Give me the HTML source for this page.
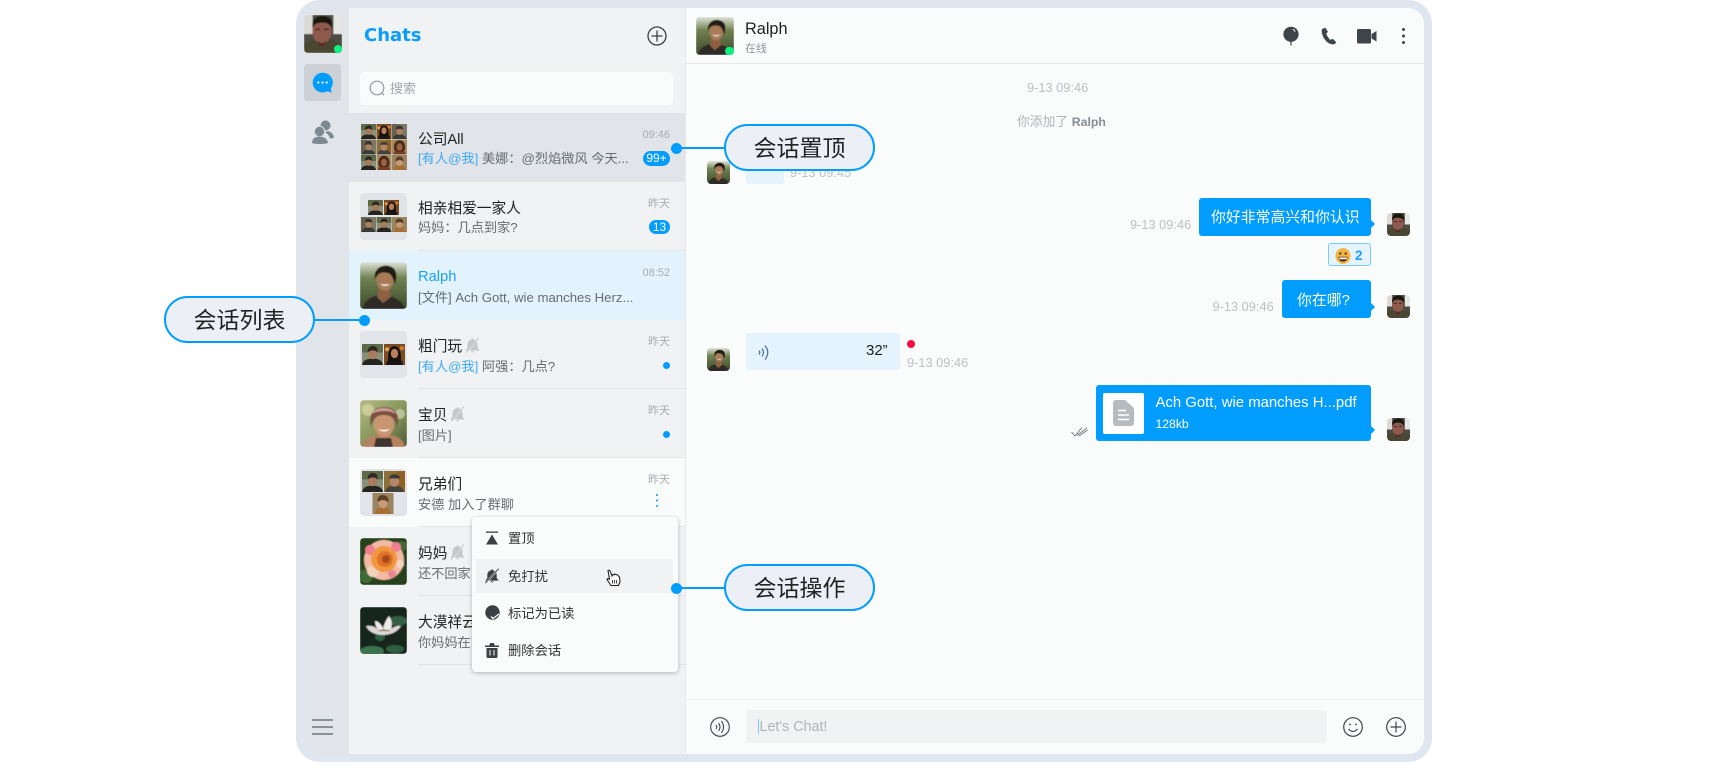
<!DOCTYPE html>
<html lang="zh"><head><meta charset="utf-8"><title>Chats</title>
<style>
html,body{margin:0;padding:0;width:1726px;height:770px;background:#fff;overflow:hidden}
body{position:relative;font-family:"Liberation Sans","Noto Sans CJK SC",sans-serif;color:#222}
.a{position:absolute}
.t{position:absolute;white-space:nowrap;line-height:20px;height:20px}
.frame{left:296px;top:0;width:1136px;height:762px;background:#dfe6ef;border-radius:24px}
.inner{left:304px;top:8px;width:1120px;height:746px;border-radius:16px;overflow:hidden;background:#fafbfb}
.bg{position:absolute;left:349px;width:336px}
.title{left:418px;font-size:14.7px;color:#222}
.sub{left:418px;font-size:13.2px;color:#666c71}
.at{color:#3fa9f7}
.time{font-size:11px;color:#a8adb2;right:1056px}
.ts{font-size:12.8px;color:#bdc1c5}
.badge{background:#009dff;color:#fff;font-size:12px;line-height:15px;height:15px;border-radius:8px;text-align:center}
.dot{background:#009dff;border-radius:50%;width:7px;height:7px}
.line{left:418px;width:267px;height:1px;background:#e3e6e8}
.av{position:absolute;border-radius:4px;overflow:hidden}
.gb{position:absolute;left:360px;width:47px;height:47px;background:#e1e4e8;border-radius:4px}
svg{position:absolute;display:block;overflow:visible}
.bub{background:#009dff;border-radius:3px}
.tail{width:0;height:0;border-left:4px solid #009dff;border-top:4px solid transparent;border-bottom:4px solid transparent;left:1371px}
.pill{background:#ecf0f6;border:2px solid #009dff;border-radius:24px;box-sizing:border-box;text-align:center;font-size:23px;line-height:44px;color:#222;width:151px;height:47px}
.conn{background:#009dff;height:2px}
.cdot{background:#009dff;border-radius:50%;width:11px;height:11px}
.mi{left:508px;font-size:13.3px;color:#333}
</style></head>
<body>
<svg width="0" height="0" style="position:absolute">
<defs>
<filter id="b"><feGaussianBlur stdDeviation="0.5"/></filter>
<linearGradient id="rb" x1="0" y1="0" x2="0" y2="1"><stop offset="0" stop-color="#dfe3d8"/><stop offset=".35" stop-color="#6f8150"/><stop offset="1" stop-color="#3d4b2c"/></linearGradient>
<linearGradient id="wb" x1="0" y1="0" x2="1" y2="1"><stop offset="0" stop-color="#b7bb85"/><stop offset=".6" stop-color="#7f8f55"/><stop offset="1" stop-color="#4d5b3a"/></linearGradient>
<symbol id="me" viewBox="0 0 40 40"><g filter="url(#b)"><rect width="40" height="40" fill="#4e4c42"/><rect x="0" width="9" height="20" fill="#dcdad6"/><rect x="31" width="9" height="20" fill="#e6e6e4"/><path d="M0 40V31L9 26H31L40 31V40Z" fill="#4a4632"/><ellipse cx="19" cy="17" rx="10" ry="13" fill="#8f5a4d"/><path d="M9 14C8 3 14 1 20 1S31 4 29 14C27 9 24 8 19 8S11 9 9 14Z" fill="#15120f"/><path d="M14 27q5 5 10 0l-2 6h-6z" fill="#5b2a28"/><path d="M12 15h5M21 15h5" stroke="#2e1c1a" stroke-width="1.500"/></g></symbol>
<symbol id="ra" viewBox="0 0 47 47"><g filter="url(#b)"><rect width="47" height="47" fill="url(#rb)"/><path d="M3 47C4 37 14 33 22 33S42 37 45 47Z" fill="#2f2c26"/><path d="M18 28l-1 7 6 6 8-6-2-9z" fill="#8d6042"/><ellipse cx="25" cy="18" rx="8.500" ry="11" fill="#a87a58"/><path d="M15 17C13 7 22 2 29 4S38 11 35 22C33 17 32 12 28 11S19 10 17 14Z" fill="#241d17"/><path d="M20 22q5 4 10 0q-5 1-10 0z" fill="#f8f4ee"/></g></symbol>
<symbol id="w" viewBox="0 0 47 47"><g filter="url(#b)"><rect width="47" height="47" fill="url(#wb)"/><circle cx="8" cy="10" r="6" fill="#dcd9a6" opacity=".7"/><circle cx="40" cy="14" r="5" fill="#e6e3c5" opacity=".6"/><path d="M2 47C4 38 12 36 18 35h12c6 1 13 3 15 12Z" fill="#b5825f"/><path d="M14 47l2-9h15l2 9z" fill="#3c3530"/><ellipse cx="24" cy="25" rx="10" ry="12" fill="#c9956f"/><path d="M11 27C8 14 14 7 24 7s17 7 13 20C35 18 31 15 24 15S13 18 11 27Z" fill="#7a5040"/><path d="M12 14C15 6 32 6 36 14 30 10 18 10 12 14Z" fill="#cf9f98"/><path d="M18 29q6 5 12 0q-6 2-12 0z" fill="#fff"/></g></symbol>
<symbol id="g1" viewBox="0 0 20 20"><rect width="20" height="20" fill="#8a9078"/><rect y="0" width="20" height="8" fill="#5c6a48"/><path d="M0 20c1-5 5-6 10-6s9 1 10 6z" fill="#26241f"/><ellipse cx="10" cy="9" rx="4.500" ry="5.500" fill="#a97a5c"/><path d="M5.500 8c-.5-5 3-6 5-6s5 1 4 6C13 5.500 8 5.500 5.500 8z" fill="#2b2620"/></symbol>
<symbol id="g2" viewBox="0 0 20 20"><rect width="20" height="20" fill="#7a4a22"/><circle cx="3" cy="5" r="2" fill="#e8a050"/><circle cx="17" cy="4" r="2" fill="#d67c30"/><path d="M2 20c0-5 3-6 8-6s8 1 8 6z" fill="#1a1512"/><path d="M4 16C3 5 7 2 10 2s7 3 6 14z" fill="#16110e"/><ellipse cx="10" cy="9" rx="3.500" ry="4.500" fill="#b67f5e"/></symbol>
<symbol id="g3" viewBox="0 0 20 20"><rect width="20" height="20" fill="#7d7868"/><rect x="0" y="0" width="8" height="20" fill="#66624f"/><path d="M1 20c1-5 5-6 9-6s8 1 9 6z" fill="#3a3a34"/><ellipse cx="10" cy="9" rx="4.500" ry="5.500" fill="#a97f60"/><path d="M5 8c0-5 3-6 5-6s5 1 5 6c-2-2-8-2-10 0z" fill="#3a352d"/></symbol>
<symbol id="g4" viewBox="0 0 20 20"><rect width="20" height="20" fill="#a88a60"/><path d="M2 20c0-5 3-6 8-6s8 1 8 6z" fill="#7a3f24"/><path d="M3 14C1 5 6 1 10 1s9 4 7 13c-2 3-12 3-14 0z" fill="#4c2a16"/><ellipse cx="10" cy="10" rx="4" ry="5" fill="#9a6444"/></symbol>
<symbol id="g5" viewBox="0 0 20 20"><rect width="20" height="20" fill="#9a8560"/><path d="M2 20c1-5 4-6 8-6s7 1 8 6z" fill="#a86e34"/><ellipse cx="10" cy="9" rx="4.500" ry="5.500" fill="#c99a78"/><path d="M5 9c-1-6 3-7 5-7s6 1 5 7c-2-3-8-3-10 0z" fill="#5a3e28"/></symbol>
<symbol id="g6" viewBox="0 0 20 20"><rect width="20" height="20" fill="#8a7038"/><rect x="12" width="8" height="20" fill="#8f6224"/><path d="M1 20c1-5 5-6 9-6s8 1 9 6z" fill="#44423c"/><ellipse cx="10" cy="10" rx="4.500" ry="5" fill="#b5866a"/><path d="M4.500 7c1-5 10-5 11 0z" fill="#3b3a38"/></symbol>
<symbol id="rose" viewBox="0 0 47 47"><g filter="url(#b)"><rect width="47" height="47" fill="#25421f"/><circle cx="6" cy="38" r="7" fill="#3f6a34"/><circle cx="42" cy="8" r="5" fill="#3f6a34"/><circle cx="24" cy="22" r="20" fill="#f3b9a2"/><circle cx="10" cy="12" r="5" fill="#ee7f90"/><circle cx="36" cy="9" r="5" fill="#ee7f90"/><circle cx="40" cy="26" r="4" fill="#f6d6c2"/><circle cx="13" cy="33" r="6" fill="#f2d2bc"/><circle cx="32" cy="36" r="4" fill="#e88795"/><circle cx="24" cy="21" r="13" fill="#f0973f"/><circle cx="25" cy="21" r="8" fill="#df7226"/><circle cx="26" cy="21" r="4" fill="#a84a1a"/></g></symbol>
<symbol id="lotus" viewBox="0 0 47 47"><g filter="url(#b)"><rect width="47" height="47" fill="#13261a"/><ellipse cx="38" cy="14" rx="9" ry="5" fill="#345f42"/><ellipse cx="12" cy="44" rx="12" ry="5" fill="#3b7350"/><ellipse cx="35" cy="42" rx="9" ry="4" fill="#2f5e40"/><ellipse cx="20" cy="30" rx="5" ry="4" fill="#2f5e40"/><path d="M6 19c6-1 10 1 13 5h10c4-4 8-6 12-5-3 5-9 9-18 9S8 24 6 19z" fill="#dcd7d4"/><path d="M15 14c3 0 6 3 8 7 2-6 4-10 6-12 2 3 4 6 2 14H18c-2-3-3-6-3-9z" fill="#efebea"/><circle cx="23.500" cy="22" r="1.300" fill="#cfc36a"/></g></symbol>
<symbol id="mute" viewBox="0 0 24 24"><path d="M12 2a1.600 1.600 0 0 0-1.600 1.600C6.500 4.600 5 7.200 5 10.500V15l-3 4h20l-3-4v-4.500c0-3.300-1.500-5.900-5.400-6.900A1.600 1.600 0 0 0 12 2z"/><path d="M9.800 20a2.300 2.300 0 0 0 4.400 0z"/></symbol>
</defs></svg>

<div class="a frame"></div>
<div class="a inner"></div>

<div class="a" style="left:304px;top:8px;width:45px;height:746px;background:#e1e4e8;border-radius:16px 0 0 16px"></div>
<div class="bg" style="top:8px;height:746px;background:#f0f2f4"></div>
<div class="a" style="left:685px;top:8px;width:1px;height:746px;background:#e6e9eb"></div>

<!-- sidebar -->
<div class="av" style="left:304px;top:15px;width:38px;height:38px"><svg width="38" height="38"><use href="#me" width="38" height="38"/></svg></div>
<div class="a" style="left:333.500px;top:45px;width:8px;height:8px;border-radius:50%;background:#0cf27f"></div>
<div class="a" style="left:304px;top:64px;width:37px;height:37px;background:#cdd1d5;border-radius:4px"></div>
<svg style="left:312px;top:72px" width="21" height="21" viewBox="0 0 21 21"><path d="M10.500 .8a9.800 9.800 0 1 0 4.700 18.400l4.600 1.300-1-3.900A9.800 9.800 0 0 0 10.500 .8z" fill="#009dff"/><circle cx="6.300" cy="10.500" r="1.100" fill="#fff"/><circle cx="10.500" cy="10.500" r="1.100" fill="#fff"/><circle cx="14.700" cy="10.500" r="1.100" fill="#fff"/></svg>
<svg style="left:311px;top:120px" width="23" height="24" viewBox="0 0 23 24" fill="#7e8a93"><circle cx="14.500" cy="5.500" r="5"/><path d="M17 11c3 .8 5.500 3 6 6.500-1 .8-2.500 1-4 .9-.6-2.500-2.500-4.800-5-6z"/><circle cx="8.500" cy="11.500" r="5.200" stroke="#e1e4e8" stroke-width="1"/><path d="M1 23c0-4 3-6.500 7.500-6.500s8 2.500 8.500 6.500c-3 1.300-13 1.300-16 0z"/></svg>
<div class="a" style="left:312px;top:719px;width:21px;height:1.500px;background:#8a9298"></div>
<div class="a" style="left:312px;top:726px;width:21px;height:1.500px;background:#8a9298"></div>
<div class="a" style="left:312px;top:733px;width:21px;height:1.500px;background:#8a9298"></div>

<!-- list header -->
<div class="t" style="left:364px;top:26px;font-family:'DejaVu Sans',sans-serif;font-weight:bold;font-size:18px;color:#0a9dfb">Chats</div>
<svg style="left:646px;top:25px" width="22" height="22" viewBox="0 0 22 22" fill="none" stroke="#3b4045" stroke-width="1.300"><circle cx="11" cy="11" r="9"/><path d="M11 5.500v11M5.500 11h11"/></svg>
<div class="a" style="left:360px;top:72px;width:313px;height:33px;background:#fafbfb;border-radius:4px"></div>
<svg style="left:369px;top:80px" width="17" height="17" viewBox="0 0 17 17" fill="none" stroke="#8f9aa2" stroke-width="1.200"><circle cx="8" cy="8" r="6.800"/><path d="M12.800 12.800l2.200 2.400"/></svg>
<div class="t" style="left:390px;top:79px;font-size:13px;color:#a2a8ad">搜索</div>

<!-- items -->
<div class="bg" style="top:113px;height:69px;background:#e1e4e8"></div>
<div class="bg" style="top:251px;height:69px;background:#e3f3fe"></div>
<div class="bg" style="top:458px;height:69px;background:#fafbfb"></div>
<div class="a line" style="top:250px"></div>
<div class="a line" style="top:388px"></div>
<div class="a line" style="top:457px"></div>
<div class="a line" style="top:526px"></div>
<div class="a line" style="top:595px"></div>
<div class="a line" style="top:664px"></div>

<!-- item1 avatars -->
<svg style="left:361px;top:124px" width="46" height="47" viewBox="0 0 46 47">
<use href="#g1" x="0" y="0" width="15" height="15"/><use href="#g2" x="15.500" y="0" width="15" height="15"/><use href="#g3" x="31" y="0" width="15" height="15"/>
<use href="#g3" x="0" y="15.500" width="15" height="15"/><use href="#g6" x="15.500" y="15.500" width="15" height="15"/><use href="#g4" x="31" y="15.500" width="15" height="15"/>
<use href="#g1" x="0" y="31" width="15" height="15"/><use href="#g4" x="15.500" y="31" width="15" height="15"/><use href="#g5" x="31" y="31" width="15" height="15"/></svg>
<div class="t title" style="top:130px">公司All</div>
<div class="t sub" style="top:149px"><span class="at">[有人@我]</span> 美娜：@烈焰微风 今天...</div>
<div class="t time" style="top:125px;right:1056px">09:46</div>
<div class="a badge" style="left:643px;top:151px;width:27px">99+</div>

<!-- item2 -->
<div class="gb" style="top:193px"></div>
<svg style="left:361px;top:200px" width="46" height="33" viewBox="0 0 46 33">
<use href="#g1" x="7" y="0" width="15" height="15"/><use href="#g2" x="23" y="0" width="15" height="15"/>
<use href="#g3" x="0" y="17" width="15" height="15"/><use href="#g1" x="15.500" y="17" width="15" height="15"/><use href="#g5" x="31" y="17" width="15" height="15"/></svg>
<div class="t title" style="top:199px">相亲相爱一家人</div>
<div class="t sub" style="top:218px">妈妈：几点到家?</div>
<div class="t time" style="top:194px">昨天</div>
<div class="a badge" style="left:649px;top:220px;width:21px;height:14px;line-height:14px">13</div>

<!-- item3 -->
<div class="av" style="left:360px;top:262px;width:47px;height:47px"><svg width="47" height="47"><use href="#ra" width="47" height="47"/></svg></div>
<div class="t title" style="top:266.500px;color:#1b9ff8;font-size:14.700px">Ralph</div>
<div class="t sub" style="top:288px">[文件] Ach Gott, wie manches Herz...</div>
<div class="t time" style="top:263px">08:52</div>

<!-- item4 -->
<div class="gb" style="top:331px"></div>
<svg style="left:362px;top:343px" width="43" height="23" viewBox="0 0 43 23"><use href="#g1" x="0" y="0" width="21" height="23"/><use href="#g2" x="22" y="0" width="21" height="23"/></svg>
<div class="t title" style="top:337px">粗门玩</div>
<svg style="left:464px;top:337px" width="17" height="17" viewBox="0 0 24 24" fill="#c3c8cc"><use href="#mute" width="24" height="24"/><path d="M3 23L21 1" stroke="#f0f2f4" stroke-width="2"/><path d="M3 22L21 1" stroke="#c3c8cc" stroke-width="1.500"/></svg>
<div class="t sub" style="top:357px"><span class="at">[有人@我]</span> 阿强：几点?</div>
<div class="t time" style="top:332px">昨天</div>
<div class="a dot" style="left:662.500px;top:361.500px"></div>

<!-- item5 -->
<div class="av" style="left:360px;top:400px;width:47px;height:47px"><svg width="47" height="47"><use href="#w" width="47" height="47"/></svg></div>
<div class="t title" style="top:406px">宝贝</div>
<svg style="left:449px;top:406px" width="17" height="17" viewBox="0 0 24 24" fill="#c3c8cc"><use href="#mute" width="24" height="24"/><path d="M3 23L21 1" stroke="#f0f2f4" stroke-width="2"/><path d="M3 22L21 1" stroke="#c3c8cc" stroke-width="1.500"/></svg>
<div class="t sub" style="top:426px">[图片]</div>
<div class="t time" style="top:401px">昨天</div>
<div class="a dot" style="left:662.500px;top:430.500px"></div>

<!-- item6 -->
<div class="gb" style="top:469px"></div>
<svg style="left:362px;top:471px" width="43" height="43" viewBox="0 0 43 43"><use href="#g1" x="0" y="0" width="21" height="21"/><use href="#g6" x="22" y="0" width="21" height="21"/><use href="#g5" x="10.500" y="22" width="21" height="21"/></svg>
<div class="t title" style="top:475px">兄弟们</div>
<div class="t sub" style="top:495px">安德 加入了群聊</div>
<div class="t time" style="top:470px">昨天</div>
<div class="a" style="left:655.700px;top:494px;width:2px;height:2px;border-radius:50%;background:#009dff;box-shadow:0 5.500px 0 #009dff,0 11px 0 #009dff"></div>

<!-- item7 -->
<div class="av" style="left:360px;top:538px;width:47px;height:47px"><svg width="47" height="47"><use href="#rose" width="47" height="47"/></svg></div>
<div class="t title" style="top:544px">妈妈</div>
<svg style="left:449px;top:544px" width="17" height="17" viewBox="0 0 24 24" fill="#c3c8cc"><use href="#mute" width="24" height="24"/><path d="M3 23L21 1" stroke="#f0f2f4" stroke-width="2"/><path d="M3 22L21 1" stroke="#c3c8cc" stroke-width="1.500"/></svg>
<div class="t sub" style="top:564px">还不回家了</div>

<!-- item8 -->
<div class="av" style="left:360px;top:607px;width:47px;height:47px"><svg width="47" height="47"><use href="#lotus" width="47" height="47"/></svg></div>
<div class="t title" style="top:613px">大漠祥云</div>
<div class="t sub" style="top:633px">你妈妈在家</div>

<!-- chat header -->
<div class="a" style="left:686px;top:63px;width:738px;height:1px;background:#e6e9eb"></div>
<div class="av" style="left:696px;top:17px;width:38px;height:38px"><svg width="38" height="38"><use href="#ra" width="38" height="38"/></svg></div>
<div class="a" style="left:725px;top:46.500px;width:8.500px;height:8.500px;border-radius:50%;background:#0cf27f"></div>
<div class="t" style="left:745px;top:19px;font-size:16.300px;color:#222">Ralph</div>
<div class="t" style="left:745px;top:39px;font-size:11px;color:#8f979d">在线</div>
<svg style="left:1283px;top:26px" width="16" height="20" viewBox="0 0 16 20"><circle cx="8" cy="8.300" r="7.600" fill="#3f464b"/><path d="M7.400 14h1.200v5.500H7.400z" fill="#3f464b"/><path d="M9.800 3.400a3.500 3.500 0 0 1 2.300 2.400" stroke="#fafbfb" stroke-width=".9" fill="none"/></svg>
<svg style="left:1321px;top:27px" width="16" height="18" viewBox="0 0 16 18"><path d="M4.300 .6L.9 2.100C.3 5.500 1.400 9.100 3.800 12.500c2 2.900 5.200 4.900 8.300 4.900 1.300 0 2.800-1.100 3.100-2.300l-3.500-3.400-2.300 1.200C7.700 11.500 6 9 5.300 6.500L7 4.900z" fill="#3f464b"/></svg>
<svg style="left:1357px;top:29px" width="20" height="15" viewBox="0 0 20 15"><rect x="0" y="0" width="14" height="14.500" rx="1.500" fill="#3f464b"/><path d="M14.500 5l5-3v10.500l-5-3z" fill="#3f464b"/></svg>
<div class="a" style="left:1401.500px;top:27.500px;width:3.500px;height:3.500px;border-radius:50%;background:#3f464b;box-shadow:0 6.500px 0 #3f464b,0 13px 0 #3f464b"></div>

<!-- messages -->
<div class="t ts" style="left:1027px;top:78px">9-13 09:46</div>
<div class="t" style="left:1017px;top:112px;font-size:12.800px;color:#b0b4b8">你添加了 <span style="color:#858e95;font-weight:bold;font-size:12.300px">Ralph</span></div>

<div class="av" style="left:707px;top:161px;width:23px;height:23px"><svg width="23" height="23"><use href="#ra" width="23" height="23"/></svg></div>
<div class="a" style="left:746px;top:150px;width:38px;height:34px;background:#e4f3fe;border-radius:3px"></div>
<div class="t ts" style="left:790px;top:163px">9-13 09:45</div>

<div class="a bub" style="left:1199px;top:198px;width:172px;height:38px"></div>
<div class="a tail" style="top:220px"></div>
<div class="t" style="left:1211px;top:208px;font-size:14.870px;color:#fff">你好非常高兴和你认识</div>
<div class="t ts" style="left:1130px;top:215px">9-13 09:46</div>
<div class="av" style="left:1387px;top:213px;width:23px;height:23px"><svg width="23" height="23"><use href="#me" width="23" height="23"/></svg></div>

<div class="a" style="left:1328px;top:243px;width:43px;height:23px;box-sizing:border-box;background:#e4f3fe;border:1px solid #7cc8fb;border-radius:3px"></div>
<svg style="left:1335px;top:247px" width="16" height="18" viewBox="0 0 16 18"><ellipse cx="8" cy="9" rx="7.500" ry="8" fill="#f4b544"/><circle cx="5.300" cy="6.500" r="1.200" fill="#5b3d1a"/><circle cx="10.700" cy="6.500" r="1.200" fill="#5b3d1a"/><path d="M3.300 9.800h9.400c-.2 3.500-2.300 5-4.700 5s-4.500-1.500-4.700-5z" fill="#5b3d1a"/><path d="M4.200 10.500h7.600v1.700H4.200z" fill="#fff"/></svg>
<div class="t" style="left:1355px;top:246px;font-size:13.500px;font-weight:bold;color:#1b9ff8">2</div>

<div class="a bub" style="left:1281.500px;top:280px;width:89.500px;height:38px"></div>
<div class="a tail" style="top:303px"></div>
<div class="t" style="left:1297px;top:291px;font-size:14.870px;color:#fff">你在哪?</div>
<div class="t ts" style="left:1212.500px;top:297px">9-13 09:46</div>
<div class="av" style="left:1387px;top:295px;width:23px;height:23px"><svg width="23" height="23"><use href="#me" width="23" height="23"/></svg></div>

<div class="av" style="left:707px;top:348px;width:23px;height:23px"><svg width="23" height="23"><use href="#ra" width="23" height="23"/></svg></div>
<div class="a" style="left:745.500px;top:333px;width:154px;height:37px;background:#e4f3fe;border-radius:3px"></div>
<svg style="left:757px;top:344px" width="13" height="17" viewBox="0 0 13 17" fill="none" stroke="#4f74ad" stroke-width="1.300"><path d="M2 6.500q1.500 2 0 4"/><path d="M5 4.500q3 4 0 8"/><path d="M8 1.500q5.500 7 0 14"/></svg>
<div class="t" style="left:866px;top:341px;font-size:15px;color:#222">32”</div>
<div class="a" style="left:906.500px;top:340px;width:8px;height:8px;border-radius:50%;background:#ff0a3c"></div>
<div class="t ts" style="left:907px;top:353px">9-13 09:46</div>

<svg style="left:1071px;top:427px" width="17" height="10" viewBox="0 0 17 10" fill="none" stroke="#6c7378" stroke-width=".9"><path d="M.5 5l3.500 4L11 .5"/><path d="M6 8.500L16 .8"/><path d="M8 9L16.500 3"/></svg>
<div class="a bub" style="left:1096px;top:385px;width:275px;height:56px"></div>
<div class="a tail" style="top:426px"></div>
<div class="a" style="left:1103px;top:393px;width:41px;height:41px;background:#fff;border-radius:2px"></div>
<svg style="left:1113px;top:400px" width="21" height="26" viewBox="0 0 21 26"><path d="M3 0h9l9 8v15a3 3 0 0 1-3 3H3a3 3 0 0 1-3-3V3a3 3 0 0 1 3-3z" fill="#b5bbbf"/><path d="M5 10.500h8M5 15h11M5 19.500h11" stroke="#fff" stroke-width="1.500"/></svg>
<div class="t" style="left:1155.500px;top:393px;font-size:14.900px;color:#fff">Ach Gott, wie manches H...pdf</div>
<div class="t" style="left:1155.500px;top:414px;font-size:12.200px;color:#fff">128kb</div>
<div class="av" style="left:1387px;top:418px;width:23px;height:23px"><svg width="23" height="23"><use href="#me" width="23" height="23"/></svg></div>

<!-- input -->
<div class="a" style="left:686px;top:699px;width:738px;height:1px;background:#f2f4f5"></div>
<div class="a" style="left:746px;top:710px;width:581px;height:33px;background:#f0f2f4;border-radius:3px"></div>
<div class="a" style="left:757.500px;top:719px;width:1.300px;height:15px;background:#7cc8fb"></div>
<div class="t" style="left:759.500px;top:717px;font-size:14.300px;color:#b0b4b8">Let's Chat!</div>
<svg style="left:709px;top:716px" width="22" height="22" viewBox="0 0 22 22" fill="none" stroke="#3f464b" stroke-width="1.100"><circle cx="11" cy="11" r="9.300"/><path d="M7 9q1.500 2 0 4"/><path d="M9.500 7q3 4 0 8"/><path d="M12.300 5q4.500 6 0 12"/></svg>
<svg style="left:1342px;top:716px" width="22" height="22" viewBox="0 0 22 22" fill="none" stroke="#3f464b" stroke-width="1.200"><circle cx="11" cy="11" r="9.300"/><path d="M6.500 13q4.500 5 9 0"/><circle cx="8" cy="8.500" r=".9" fill="#3f464b" stroke="none"/><circle cx="14" cy="8.500" r=".9" fill="#3f464b" stroke="none"/></svg>
<svg style="left:1385px;top:716px" width="22" height="22" viewBox="0 0 22 22" fill="none" stroke="#3f464b" stroke-width="1.200"><circle cx="11" cy="11" r="9.300"/><path d="M11 5.500v11M5.500 11h11"/></svg>

<!-- context menu -->
<div class="a" style="left:472px;top:517px;width:206px;height:155px;background:#fafbfb;border-radius:4px;box-shadow:0 1px 4px rgba(0,0,0,.25)"></div>
<div class="a" style="left:476px;top:559px;width:197px;height:34px;background:#f0f2f4"></div>
<svg style="left:485px;top:531px" width="14" height="14" viewBox="0 0 14 14" fill="#3b4045"><rect x="1" y="0.500" width="12" height="1.300"/><path d="M7 3.500L13 13.500H1z"/></svg>
<div class="t mi" style="top:529px">置顶</div>
<svg style="left:484px;top:568px" width="16" height="16" viewBox="0 0 24 24" fill="#3b4045"><use href="#mute" width="24" height="24"/><path d="M2 23L22 1" stroke="#f0f2f4" stroke-width="3"/><path d="M2 22.500L22 1" stroke="#3b4045" stroke-width="1.500"/></svg>
<div class="t mi" style="top:567px">免打扰</div>
<svg style="left:484.500px;top:605px" width="15" height="15" viewBox="0 0 15 15"><circle cx="7.500" cy="7.500" r="7.200" fill="#3b4045"/><path d="M6 11.500l2 2L14 9" fill="none" stroke="#fafbfb" stroke-width="1.300"/></svg>
<div class="t mi" style="top:604px">标记为已读</div>
<svg style="left:484.500px;top:643px" width="14" height="15" viewBox="0 0 14 15" fill="#3b4045"><path d="M0 2.500h14v1.500H0zM4.500 1L5.500 0h3l1 1v1.500h-5z"/><path d="M1.500 5h11v8.500a1.500 1.500 0 0 1-1.500 1.500H3a1.500 1.500 0 0 1-1.500-1.500z"/><path d="M5 7v5.500M9 7v5.500" stroke="#fafbfb" stroke-width="1"/></svg>
<div class="t mi" style="top:641px">删除会话</div>
<svg style="left:605px;top:569px" width="16" height="18" viewBox="0 0 16 18"><path d="M3 1.500c1-.8 2 0 2.300 1L7 7l.7-1.500 1.500.5.500-1 1.500.7.700-.2L14.500 8l.5 4.500-1.500 4H6l-4-6 .7-1 1.800.7z" fill="#fff" stroke="#222" stroke-width="1.100"/><path d="M7.500 11v3.500M9.500 11v3.500M11.500 11v3.500" stroke="#333" stroke-width=".9"/></svg>

<!-- annotations -->
<div class="a conn" style="left:676px;top:147px;width:49px"></div>
<div class="a cdot" style="left:670.500px;top:142.500px"></div>
<div class="a pill" style="left:724px;top:124px">会话置顶</div>

<div class="a conn" style="left:314px;top:319px;width:50px"></div>
<div class="a cdot" style="left:358.500px;top:314.500px"></div>
<div class="a pill" style="left:164px;top:296px">会话列表</div>

<div class="a conn" style="left:676px;top:587px;width:49px"></div>
<div class="a cdot" style="left:670.500px;top:582.500px"></div>
<div class="a pill" style="left:724px;top:564px">会话操作</div>
</body></html>
